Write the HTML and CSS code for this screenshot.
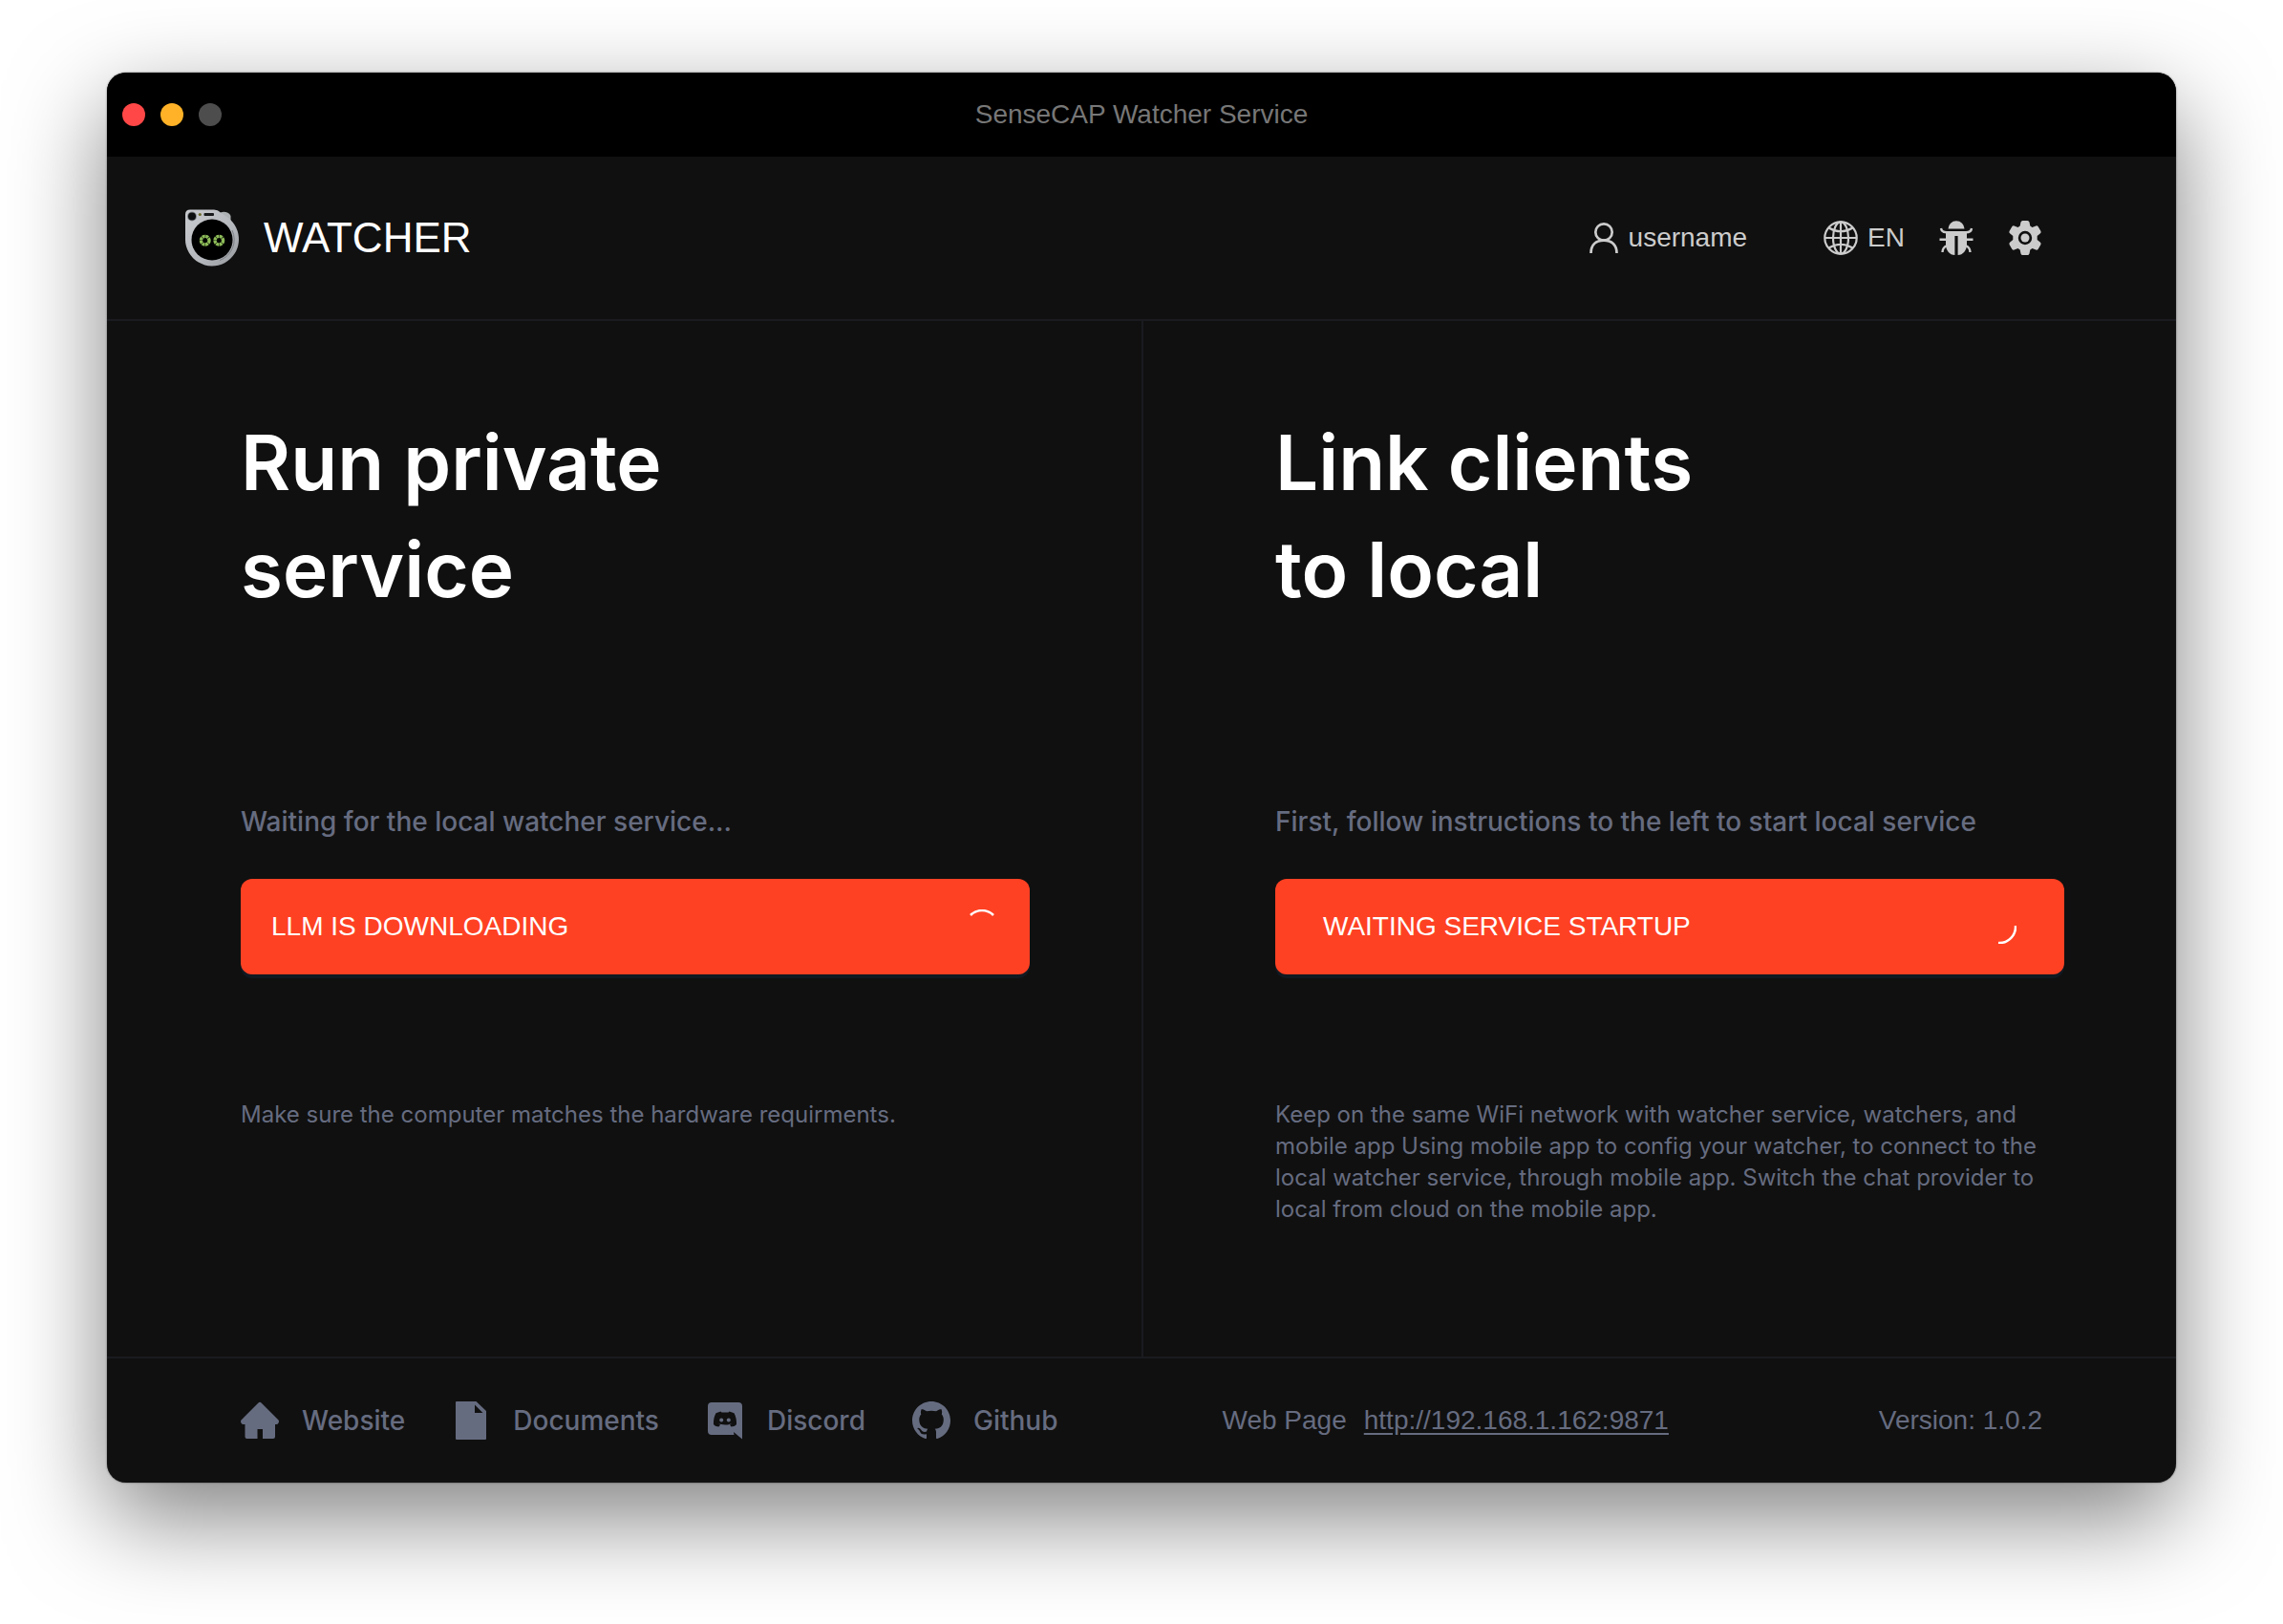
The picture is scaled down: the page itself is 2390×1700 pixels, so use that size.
FILE: index.html
```html
<!DOCTYPE html>
<html lang="en">
<head>
<meta charset="UTF-8" />
<meta name="viewport" content="width=device-width, initial-scale=1.0">
<title>SenseCAP Watcher Service</title>
<link rel="stylesheet" href="styles.css">
</head>
<body>

<div class="window">
  <div class="titlebar">
    <div class="lights">
      <button class="light close" aria-label="Close"></button>
      <button class="light minimize" aria-label="Minimize"></button>
      <button class="light zoom" aria-label="Zoom" disabled></button>
    </div>
    <div class="title">SenseCAP Watcher Service</div>
  </div>

  <header>
    <div class="brand">
      <svg width="56" height="60" viewBox="0 0 56 60" aria-hidden="true">
        <defs>
          <linearGradient id="shell" x1="0" y1="0" x2="1" y2="1">
            <stop offset="0" stop-color="#c9cbcf" />
            <stop offset="0.6" stop-color="#b4b7bc" />
            <stop offset="1" stop-color="#94979c" />
          </linearGradient>
        </defs>
        <path d="M37 3.500C40 2 46 3 47.500 7V13L37 9Z" fill="#aeb2b4" />
        <path d="M5 0.500H30Q34 0.500 37 3.500L44 8.500A28 28 0 1 1 0 32V5.500Q0 0.500 5 0.500Z" fill="url(#shell)" />
        <path d="M36 53.500A23 23 0 0 0 49 22" fill="none" stroke="#7b7e83" stroke-width="1" />
        <circle cx="28" cy="32" r="21.500" fill="#000" />
        <circle cx="7" cy="7.500" r="5" fill="#85888d" />
        <circle cx="7" cy="7.500" r="4" fill="#0c0e10" />
        <circle cx="15.300" cy="5.500" r="1.600" fill="#6d6a2c" />
        <rect x="19.500" y="4" width="10.500" height="3" rx="1" fill="#17191b" />
        <g fill="none" stroke="#8dbb58" stroke-width="3.400">
          <circle cx="20.700" cy="32.700" r="4.300" stroke-dasharray="2.900 0.480" />
          <circle cx="35.300" cy="32.700" r="4.300" stroke-dasharray="2.900 0.480" />
        </g>
      </svg>
      <span>WATCHER</span>
    </div>

    <div class="tools">
      <button class="user">
        <svg width="32" height="36" viewBox="0 0 32 36" fill="none" stroke="currentColor" stroke-width="2.700" aria-hidden="true">
          <circle cx="16" cy="12" r="8.700" />
          <path d="M2.500 34C2.500 25 8 20.700 16 20.700S29.500 25 29.500 34" />
        </svg>
        username
      </button>
      <button class="lang">
        <svg width="36" height="36" viewBox="0 0 36 36" fill="none" stroke="currentColor" stroke-width="2.200" aria-hidden="true">
          <circle cx="18" cy="18" r="16.700" />
          <ellipse cx="18" cy="18" rx="8" ry="16.700" />
          <path d="M18 1V35M1 18H35M5.500 7.500Q18 15 30.500 7.500M5.500 28.500Q18 21 30.500 28.500" />
        </svg>
        EN
      </button>
      <button class="icon-btn" aria-label="Report a bug">
        <svg width="36" height="36" viewBox="0 0 36 36" aria-hidden="true">
          <path d="M9.500 8.500A8.500 8.300 0 0 1 26.500 8.500Z" fill="currentColor" />
          <path d="M7 11H29V25C29 31 25 36 19.600 36V16H16.400V36C11 36 7 31 7 25Z" fill="currentColor" />
          <path d="M2 8Q2.500 12.300 8 12.300M34 8Q33.500 12.300 28 12.300M0.500 19.700H8M28 19.700H35.500M8.500 26Q3.500 28 3.500 33M27.500 26Q32.500 28 32.500 33" fill="none" stroke="currentColor" stroke-width="2.400" />
        </svg>
      </button>
      <button class="icon-btn" aria-label="Settings">
        <svg width="36" height="36" viewBox="0 0 36 36" fill="currentColor" aria-hidden="true">
          <path fill-rule="evenodd" d="M13.500 1.500Q14 0 15.500 0H20.500Q22 0 22.500 1.500L23.300 5.600L25.500 6.900L29.300 5.500Q30.800 5 31.700 6.300L34.300 10.800Q35 12.200 34 13.300L30.700 16V20L34 22.700Q35 23.800 34.300 25.200L31.700 29.700Q30.800 31 29.300 30.500L25.500 29.100L23.300 30.400L22.500 34.500Q22 36 20.500 36H15.500Q14 36 13.500 34.500L12.700 30.400L10.500 29.100L6.700 30.500Q5.200 31 4.300 29.700L1.700 25.200Q1 23.800 2 22.700L5.300 20V16L2 13.300Q1 12.200 1.700 10.800L4.300 6.300Q5.200 5 6.700 5.500L10.500 6.900L12.700 5.600ZM18 10.800A7.200 7.200 0 1 0 18 25.200A7.200 7.200 0 1 0 18 10.800Z" />
          <circle cx="18" cy="18" r="4.500" />
        </svg>
      </button>
    </div>
  </header>

  <main>
    <section class="pane">
      <h2>Run private<br>service</h2>
      <p class="status">Waiting for the local watcher service...</p>
      <button class="action">
        LLM IS DOWNLOADING
        <svg width="36" height="36" viewBox="0 0 36 36" aria-hidden="true">
          <path d="M6 6A17 17 0 0 1 30 6" fill="none" stroke="currentColor" stroke-width="2.500" />
        </svg>
      </button>
      <p class="note">Make sure the computer matches the hardware requirments.</p>
    </section>

    <section class="pane">
      <h2>Link clients<br>to local</h2>
      <p class="status">First, follow instructions to the left to start local service</p>
      <button class="action wide">
        WAITING SERVICE STARTUP
        <svg width="36" height="36" viewBox="0 0 36 36" aria-hidden="true">
          <path d="M35 17A17 17 0 0 1 17 35" fill="none" stroke="currentColor" stroke-width="2.500" />
        </svg>
      </button>
      <p class="note">Keep on the same WiFi network with watcher service, watchers, and mobile app Using mobile app to config your watcher, to connect to the local watcher service, through mobile app. Switch the chat provider to local from cloud on the mobile app.</p>
    </section>
  </main>

  <footer>
    <nav>
      <a href="#">
        <svg width="40" height="40" viewBox="0 0 40 40" fill="currentColor" aria-hidden="true">
          <path d="M18.500 1.500Q20 0 21.500 1.500L39.500 19.500Q40.500 21 39.500 22.500Q39 24 37 24H36V37Q36 39 34 39H23V29H17.500V39H6.500Q4.500 39 4.500 37V24H3Q1 24 0.500 22.500Q-0.500 21 0.500 19.500Z" />
        </svg>
        Website
      </a>
      <a href="#">
        <svg width="40" height="40" viewBox="0 0 40 40" fill="currentColor" aria-hidden="true">
          <path fill-rule="evenodd" d="M5 0H25.500L36 10V39Q36 40 35 40H5Q4 40 4 39V1Q4 0 5 0ZM24 3.500V12H32.500Z" />
        </svg>
        Documents
      </a>
      <a href="#">
        <svg width="40" height="40" viewBox="0 0 40 40" fill="currentColor" aria-hidden="true">
          <path fill-rule="evenodd" d="M6 1H34Q38 1 38 5V39.500L29 32L29.500 35H6Q2 35 2 31V5Q2 1 6 1ZM10.500 12.300L15.500 10.500L16.500 11.500H23.500L24.500 10.500L29.500 12.300C31.500 16 32.200 20 32 24C30.500 25.800 28.500 26.500 26.500 26.500L25 24.500L27 23.300C23 24.800 17 24.800 13 23.300L15 24.500L13.500 26.500C11.500 26.500 9.500 25.800 8 24C7.800 20 8.500 16 10.500 12.300Z" />
          <circle cx="16.200" cy="19.500" r="2" />
          <circle cx="23.800" cy="19.500" r="2" />
        </svg>
        Discord
      </a>
      <a href="#">
        <svg width="40" height="40" viewBox="0 0 16 16" fill="currentColor" aria-hidden="true">
          <path d="M8 0C3.580 0 0 3.580 0 8c0 3.540 2.290 6.530 5.470 7.590.4.070.55-.17.55-.38 0-.19-.01-.82-.01-1.490-2.010.37-2.530-.49-2.690-.94-.09-.23-.48-.94-.82-1.130-.28-.15-.68-.52-.01-.53.63-.01 1.080.58 1.230.82.72 1.210 1.870.87 2.330.66.070-.52.28-.87.51-1.070-1.780-.2-3.640-.89-3.640-3.950 0-.87.31-1.590.82-2.150-.08-.2-.36-1.020.08-2.120 0 0 .67-.21 2.200.82.64-.18 1.320-.27 2-.27s1.360.09 2 .27c1.530-1.040 2.200-.82 2.200-.82.44 1.100.16 1.920.08 2.120.51.56.82 1.270.82 2.150 0 3.070-1.870 3.750-3.650 3.950.29.25.54.73.54 1.480 0 1.070-.01 1.930-.01 2.200 0 .21.15.46.55.38A8.010 8.010 0 0 0 16 8c0-4.420-3.580-8-8-8z" />
        </svg>
        Github
      </a>
    </nav>
    <div class="webpage">
      <span>Web Page</span>
      <a href="http://192.168.1.162:9871">http://192.168.1.162:9871</a>
    </div>
    <div class="version">Version: 1.0.2</div>
  </footer>
</div>

</body>
</html>
```

FILE: styles.css
```css
* {
  box-sizing: border-box;
}

body {
  font-family: "Liberation Sans", Arial, sans-serif;
  font-size: 28px;
  line-height: 40px;
  background: #fff;
  margin: 0;
  padding: 76px 112px 148px;
  min-height: 100vh;
  display: flex;
  color: #666c80;
}

button {
  font: inherit;
  color: inherit;
  background: none;
  border: none;
  padding: 0;
  cursor: pointer;
}

svg {
  display: block;
  flex: none;
}

.window {
  flex: 1;
  display: flex;
  flex-direction: column;
  background: #101010;
  border-radius: 20px;
  overflow: hidden;
  box-shadow: 0 0 2px rgba(0,0,0,0.6), 0 36px 100px rgba(0,0,0,0.5);
}

.titlebar {
  display: grid;
  grid-template-columns: 1fr auto 1fr;
  align-items: center;
  height: 88px;
  padding: 0 16px;
  background: #000;
}

.lights {
  display: flex;
  gap: 16px;
}

.light {
  width: 24px;
  height: 24px;
  border-radius: 50%;
}

.close {
  background: #ff4747;
}

.minimize {
  background: #ffb227;
}

.zoom {
  background: #4d4d4d;
}

.title {
  color: #777;
}

header {
  display: flex;
  align-items: center;
  justify-content: space-between;
  height: 172px;
  padding: 0 140px 0 82px;
  border-bottom: 2px solid #1a1b20;
}

.brand {
  display: flex;
  align-items: center;
  gap: 26px;
  color: #fff;
  font-size: 44px;
}

.tools {
  display: flex;
  align-items: center;
  gap: 36px;
  color: #ccc;
}

.user,
.lang {
  display: flex;
  align-items: center;
  gap: 10px;
}

.user {
  margin-right: 44px;
}

main {
  flex: 1;
  display: grid;
  grid-template-columns: 1fr 1fr;
}

.pane {
  padding: 92px 117px 92px 140px;
}

.pane + .pane {
  box-shadow: inset 2px 0 #1a1b20;
}

h2 {
  margin: 0 0 188px;
  color: #fff;
  font-family: Inter, sans-serif;
  font-size: 80px;
  font-weight: 600;
  line-height: 112px;
}

.status,
.note,
nav {
  font-family: Inter, sans-serif;
}

.status {
  margin: 0 0 40px;
  font-weight: 500;
}

.action {
  display: flex;
  align-items: center;
  justify-content: space-between;
  width: 100%;
  height: 100px;
  padding: 0 32px;
  background: #fe4123;
  color: #fff;
  border-radius: 12px;
  box-shadow: 0 4px 0 #111921;
}

.wide {
  padding: 0 50px;
}

.note {
  margin: 130px 0 0;
  font-size: 24px;
  line-height: 33px;
}

footer {
  display: flex;
  align-items: center;
  height: 132px;
  padding: 0 140px;
  border-top: 2px solid #1a1b20;
}

nav {
  display: flex;
  gap: 49px;
  font-weight: 500;
}

nav a {
  display: flex;
  align-items: center;
  gap: 24px;
  color: inherit;
  text-decoration: none;
}

.webpage {
  display: flex;
  gap: 18px;
  margin-left: 172px;
}

.webpage a {
  color: inherit;
  text-underline-offset: 4px;
}

.version {
  margin-left: auto;
}
```
